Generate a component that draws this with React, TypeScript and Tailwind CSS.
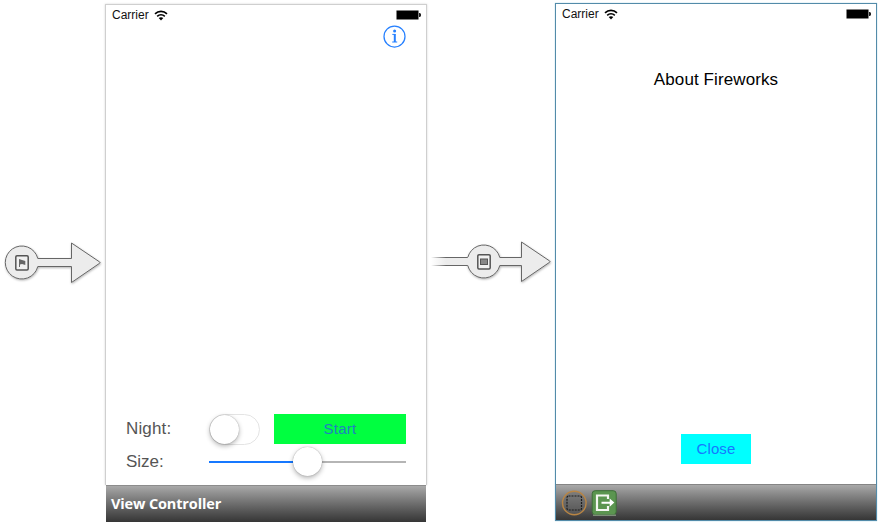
import React from "react";

const sans = "font-['Liberation_Sans',Arial,sans-serif]";

function Wifi() {
  return (
    <svg className="mt-px" width="14" height="11" viewBox="0 0 14 11" fill="none" stroke="#000" strokeWidth="1.6">
      <path d="M1 3.9C4.4 .5 9.6 .5 13 3.9" />
      <path d="M3.2 6.4C5.4 4.2 8.6 4.2 10.8 6.4" />
      <path d="M7 10.4L4.7 8C6.1 6.9 7.9 6.9 9.3 8Z" fill="#000" stroke="none" />
    </svg>
  );
}

function StatusBar() {
  return (
    <div className="flex h-5 items-center pl-[6px] pr-[5px]">
      <span className="w-[42px] whitespace-nowrap text-[12px] leading-5 text-[#111]">Carrier</span>
      <Wifi />
      <svg className="ml-auto" width="25" height="10" viewBox="0 0 25 10">
        <rect x=".5" y=".5" width="22" height="9" rx=".8" fill="#000" stroke="#808080" />
        <path d="M23 3h1l1 1v2l-1 1h-1z" fill="#222" />
      </svg>
    </div>
  );
}

function Arrow({ kind }: { kind: "entry" | "segue" }) {
  const entry = kind === "entry";
  return (
    <svg
      className="block"
      width={entry ? 100 : 124}
      height="46"
      viewBox={entry ? "0 0 100 46" : "-36 0 124 46"}
      fill="none"
    >
      <defs>
        <linearGradient id="tailFill" gradientUnits="userSpaceOnUse" x1="-35" y1="0" x2="-20" y2="0">
          <stop offset="0" stopColor="#ececec" stopOpacity="0" />
          <stop offset="1" stopColor="#ececec" />
        </linearGradient>
        <linearGradient id="tailLine" gradientUnits="userSpaceOnUse" x1="-35" y1="0" x2="-20" y2="0">
          <stop offset="0" stopColor="#666" stopOpacity="0" />
          <stop offset="1" stopColor="#666" />
        </linearGradient>
        <filter id={kind + "Shadow"} x="-10%" y="-10%" width="125%" height="130%">
          <feDropShadow dx=".5" dy="1" stdDeviation="1" floodOpacity=".3" />
        </filter>
      </defs>
      <path
        d={
          entry
            ? "M33.8 18.5H67.5V3L95.7 22Q96.4 22.6 95.7 23.2L67.5 42.5V26.5H33.8A16.5 16.5 0 1 1 33.8 18.5Z"
            : "M33.8 18.5H55.5V3L83.7 22Q84.4 22.6 83.7 23.2L55.5 42.5V26.5H33.8A16.5 16.5 0 1 1 33.8 18.5Z"
        }
        fill="#ececec"
        stroke="#666"
        filter={`url(#${kind}Shadow)`}
      />
      {!entry && (
        <>
          <rect x="-35" y="18" width="38" height="8.5" fill="url(#tailFill)" />
          <rect x="-35" y="18" width="36.8" height="1" fill="url(#tailLine)" />
          <rect x="-35" y="26" width="36.8" height="1" fill="url(#tailLine)" />
        </>
      )}
      <rect x="11.8" y="15.7" width="12.4" height="14.2" rx="1.2" fill="#f1f1f1" stroke="#555" strokeWidth="1.5" />
      {entry ? (
        <path d="M15 27V19L18 19.9L21.3 20.9V25L18 24L16 24.5V27Z" fill="#666" />
      ) : (
        <rect x="14.5" y="20" width="7" height="5.5" fill="#888" stroke="#555" />
      )}
    </svg>
  );
}

function MainScene() {
  return (
    <section className="mt-1 w-[322px] shrink-0">
      <div className="flex h-[481px] flex-col border border-b-0 border-[#cfcfcf] bg-white shadow-[0_0_2px_rgba(0,0,0,0.16)]">
        <StatusBar />
        <div className="flex justify-end pr-5">
          <svg width="23" height="23" viewBox="0 0 23 23" fill="none">
            <circle cx="11.5" cy="11.5" r="10.5" stroke="#2680ff" strokeWidth="1.25" />
            <circle cx="11.6" cy="6" r="1.5" fill="#2680ff" />
            <path d="M9.3 9.4h3M9.2 17h5" stroke="#2680ff" strokeWidth="1" />
            <path d="M11.8 9v8" stroke="#2680ff" strokeWidth="2" />
          </svg>
        </div>
        <div className="mt-auto flex h-[31px] items-start pl-5 pr-5">
          <span className="w-[83px] text-[17px] leading-[29px] tracking-[0.15px] text-[#555]">Night:</span>
          <div className="h-[31px] w-[51px] rounded-full border-[1.5px] border-[#e4e4e4] bg-white">
            <div className="h-[29px] w-[29px] rounded-full bg-white shadow-[0_2px_5px_rgba(0,0,0,0.3),0_0_1px_rgba(0,0,0,0.4)]" />
          </div>
          <button className="ml-[14px] h-[30px] w-[132px] bg-[#00ff40] text-[15px] leading-[30px] tracking-[0.25px] text-[#2080c0]">Start</button>
        </div>
        <div className="mb-[8px] mt-px flex h-[31px] items-center pl-5 pr-5">
          <span className="w-[83px] text-[17px] leading-[31px] text-[#555]">Size:</span>
          <div className="flex flex-1 items-center">
            <div className="h-[2px] w-[84px] bg-[#1678ff]" />
            <div className="z-10 h-[29px] w-[29px] rounded-full bg-white shadow-[0_2px_5px_rgba(0,0,0,0.3),0_0_1px_rgba(0,0,0,0.4)]" />
            <div className="h-[2px] flex-1 bg-[#b5b5b5]" />
          </div>
        </div>
      </div>
      <div className="mx-px flex h-[37px] items-center border-t border-[#8c8c8c] bg-linear-to-b from-[#a9a9a9] to-[#363636] pl-[5px]">
        <span className="whitespace-nowrap font-['Open_Sans',sans-serif] text-[14.5px] font-bold tracking-[-0.14px] text-white">View Controller</span>
      </div>
    </section>
  );
}

function AboutScene() {
  return (
    <section className="mt-[3px] flex h-[518px] w-[322px] shrink-0 flex-col border border-[#538ba9] bg-white shadow-[0_0_1px_#8bc0dc]">
      <StatusBar />
      <h1 className="mt-[46px] text-center text-[17px] leading-[20px] tracking-[0.1px] text-black">About Fireworks</h1>
      <button className="mx-auto mt-auto h-[30px] w-[70px] bg-[#00ffff] text-[15px] leading-[30px] tracking-[0.1px] text-[#1678ff]">Close</button>
      <div className="mt-5 flex h-9 shrink-0 items-center gap-1 border-t border-[#858585] bg-linear-to-b from-[#a9a9a9] to-[#363636] pl-[5px]">
        <svg width="26" height="26" viewBox="0 0 26 26" fill="none">
          <circle cx="13.3" cy="13" r="11.8" fill="#666" fillOpacity=".45" stroke="#b98543" strokeWidth="1.4" />
          <rect x="6" y="6" width="14.5" height="14" rx="1.5" stroke="#1d1d1d" strokeWidth="1.2" strokeDasharray="2 1" />
        </svg>
        <svg width="26" height="26" viewBox="0 0 26 26" fill="none">
          <rect x="1.2" y=".7" width="24" height="24" rx="3" fill="#5b9550" stroke="#3d6d38" />
          <path d="M2 25.2h23" stroke="#97ad91" />
          <path d="M17 9V5.5H6V20H17V16" stroke="#f4f6f2" strokeWidth="2.2" />
          <path d="M10.5 11.7h8.2V8.5l4.6 4.1-4.6 4.2v-3h-8.2z" fill="#fff" />
        </svg>
      </div>
    </section>
  );
}

export default function App() {
  return (
    <main className={`flex h-[526px] w-[881px] items-start overflow-hidden bg-white ${sans}`}>
      <div className="w-[105px] shrink-0 pl-1 pt-[240px]"><Arrow kind="entry" /></div>
      <MainScene />
      <div className="w-[128px] shrink-0 pl-[3px] pt-[239px]"><Arrow kind="segue" /></div>
      <AboutScene />
    </main>
  );
}
